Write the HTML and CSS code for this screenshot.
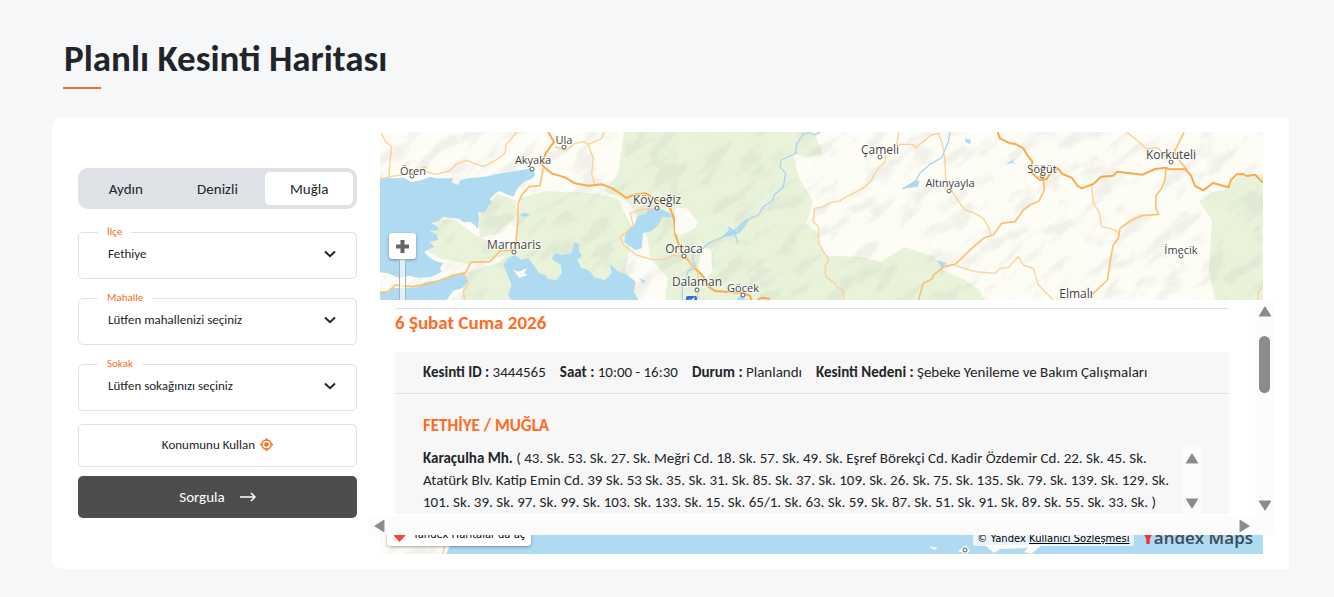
FILE: index.html
```html
<!DOCTYPE html>
<html lang="tr">
<head>
<meta charset="utf-8">
<title>Planlı Kesinti Haritası</title>
<link rel="stylesheet" href="styles.css">
</head>
<body>
<main class="page">
  <h1 class="page-title">Planlı Kesinti Haritası</h1>
  <section class="card">
    <form class="filters">
      <div class="tabs">
        <button type="button" class="tab">Aydın</button>
        <button type="button" class="tab">Denizli</button>
        <button type="button" class="tab tab-active">Muğla</button>
      </div>
      <div class="field">
        <label for="ilce">İlçe</label>
        <select id="ilce"><option>Fethiye</option></select>
        <svg class="chevron" viewBox="0 0 12 8"><path d="M1 1.5 6 6.2 11 1.5"/></svg>
      </div>
      <div class="field">
        <label for="mahalle">Mahalle</label>
        <select id="mahalle"><option>Lütfen mahallenizi seçiniz</option></select>
        <svg class="chevron" viewBox="0 0 12 8"><path d="M1 1.5 6 6.2 11 1.5"/></svg>
      </div>
      <div class="field">
        <label for="sokak">Sokak</label>
        <select id="sokak"><option>Lütfen sokağınızı seçiniz</option></select>
        <svg class="chevron" viewBox="0 0 12 8"><path d="M1 1.5 6 6.2 11 1.5"/></svg>
      </div>
      <button type="button" class="btn btn-locate">Konumunu Kullan
        <svg class="locate-icon" viewBox="0 0 13 13"><circle cx="6.500" cy="6.500" r="4.600"/><circle class="dot" cx="6.500" cy="6.500" r="2.300"/><path d="M6.500 0v2M6.500 11v2M0 6.500h2M11 6.500h2"/></svg>
      </button>
      <button type="submit" class="btn btn-submit">Sorgula
        <svg class="arrow-icon" viewBox="0 0 16 10"><path d="M0 5h15M11 1l4 4-4 4"/></svg>
      </button>
    </form>

    <div class="map-column">
      <div class="map">
        <svg class="map-canvas" viewBox="380 132 883 422" preserveAspectRatio="xMidYMin slice">
          <defs>
            <filter id="relief" x="0" y="0" width="100%" height="100%">
              <feTurbulence type="fractalNoise" baseFrequency="0.03 0.07" numOctaves="3" seed="8"/>
              <feColorMatrix values="0 0 0 0 .42  0 0 0 0 .43  0 0 0 0 .4  5 0 0 0 -2.5"/>
            </filter>
            <clipPath id="frame"><rect x="380" y="132" width="883" height="422"/></clipPath>
          </defs>
          <rect class="land" x="380" y="132" width="883" height="422"/>
          <g class="forest">
            <path d="M624 132H803L816 137 823 154 807 158 792 153 800 180 813 201 806 224 817 232 824 256 840 256 862 257 880 262 905 247 935 257 941 269 965 280 980 290 984 300H665L668 278 650 258 648 240 640 220 627 201 604 191 618 174Z"/>
            <path d="M521 198 545 191 590 193 617 198 632 227 630 248 625 270 636 290 615 300H460L468 272 500 262 515 245Z"/>
            <path d="M497 194 515 200 518 215 505 226 495 234 480 238 478 215ZM435 218 457 221 475 235 505 250 512 254 490 259 470 264 442 259 428 252Z"/>
            <path d="M1199 201 1212 192 1225 190 1238 176 1263 174V300H1215L1209 270 1212 220Z"/>
          </g>
          <g clip-path="url(#frame)"><rect class="relief" x="300" y="-400" width="1250" height="1200" filter="url(#relief)" transform="rotate(-38 820 300)"/></g>
          <g transform="translate(375 125) scale(.33333)">
            <g class="water">
              <path d="M15 163 40 158 60 160 85 158 100 166 110 172 140 165 165 155 185 160 235 160 230 172 250 180 257 165 290 158 330 155 360 148 400 142 440 135 475 130 480 150 470 162 450 168 430 185 415 215 395 208 372 198 358 208 344 222 352 235 340 242 330 262 310 262 312 285 308 312 300 300 285 290 265 292 250 280 225 278 205 275 190 288 170 295 185 303 190 315 165 318 185 328 190 345 163 350 178 365 148 380 160 395 180 408 205 415 195 430 200 440 170 455 130 458 100 452 70 458 40 445 15 442Z"/>
              <path d="M15 500 40 505 52 488 90 490 125 487 150 472 190 466 235 450 268 445 278 470 262 490 235 497 215 525H15Z"/>
              <path d="M385 420 400 400 418 390 440 405 460 400 480 425 492 445 510 450 520 462 545 465 560 445 558 420 530 402 540 385 560 390 590 385 598 352 612 358 612 380 622 392 606 405 618 428 640 435 660 458 690 465 710 445 705 418 730 440 760 452 782 470 775 498 790 525H408L400 510 410 480 400 455Z"/>
              <path d="M820 250 850 248 885 265 890 278 862 275 850 300 830 318 804 325 800 370 780 374 748 350 752 325 778 300 788 272 812 268ZM434 270 445 263 466 268 450 277ZM792 460 812 468 805 475Z"/>
            </g>
            <path class="isle" d="M415 435 430 440 455 430 448 445 458 450 432 458Z"/>
            <g class="road-minor">
              <path d="M20 25 30 48 50 65 45 110 42 155"/>
              <path d="M15 160 45 155 80 150 110 140 155 125 145 137 180 148 225 138 242 118 275 106 325 125 360 107 390 85 393 60 425 22"/>
              <path d="M688 22 678 42 640 58 625 50 600 55 575 76 540 66"/>
              <path d="M640 60 655 100 650 145 660 180"/>
              <path d="M845 250 790 255 765 265 775 300 755 320 735 335 745 360 785 390 830 404 870 404 900 388"/>
              <path d="M268 445 280 475 264 500 270 525"/>
            </g>
            <g class="road-mid">
              <path d="M505 130 495 182 462 185 440 210 430 235 428 300 420 375 375 378 345 410 287 412 272 443 230 452 170 475 110 485 60 480 40 500 15 503"/>
            </g>
            <path class="road-main" d="M520 22 537 50 512 85 500 120 530 145 570 157 600 175 640 182 680 178 712 190 755 219 775 210 812 205 850 228 885 248 898 285 900 325 915 370 930 395 960 430 985 455 1000 485 1020 498 1095 503 1125 512 1130 525"/>
          </g>
          <g transform="translate(675 125) scale(.33333)">
            <path class="isle" d="M0 248 35 250 70 290 60 310 20 330 0 325ZM80 365 108 375 112 440 95 460 70 430Z"/>
            <path class="lake" d="M165 310 185 320 200 295 222 285 200 318 180 330 140 338ZM190 515 205 508 210 525H186ZM870 40 888 45 885 58 872 52ZM680 192 715 170 732 165 730 185ZM785 405 815 415 800 430ZM992 118 1008 108 1020 100 1014 112 1024 118 1010 114Z"/>
            <g class="river">
              <path d="M435 22 418 30 402 22 385 28 365 55 362 85 318 105 315 125 332 145 325 185 298 210 292 228 265 245 250 270 215 285 175 320 130 342 100 355 85 370 60 380 52 400 62 425 38 440 32 470 22 480 22 525"/>
              <path d="M160 305 180 325 188 355M825 22 820 50 800 98 765 118 735 145 720 170 682 192"/>
            </g>
            <g class="road-minor">
              <path d="M672 22 665 58 632 82 630 110 602 140 590 165 570 185 540 203 505 220 495 228 470 232 440 247 418 250 415 290 430 305 432 355 448 385 462 402 450 425 452 455 480 475 492 490 505 497 506 525"/>
              <path d="M672 58 715 58 720 68 745 50 768 30 795 25"/>
              <path d="M788 22 802 55 810 105 812 165 835 205 855 235 870 255 900 265 925 280 942 310 948 330"/>
              <path d="M0 390 30 400 70 435M68 440V525M842 422 900 440 960 445 975 430 1000 428 1030 395 1045 420 1075 430 1090 480 1110 500 1135 525"/>
            </g>
            <path class="road-mid" d="M1105 155 1108 195 1092 228 1065 240 1045 255 1020 290 980 295 955 330 925 340 885 375 860 400 840 418 808 425 775 450 772 462 745 475 730 525"/>
            <path class="road-main" d="M248 524 262 518 285 522"/>
            <rect class="airport" x="33" y="513" width="33" height="30" rx="5"/>
            <path class="plane" d="M40 522 48 525 60 516 56 528 48 530Z"/>
          </g>
          <g transform="translate(975 125) scale(.33333)">
            <g class="road-minor">
              <path d="M455 22 485 45 515 72 550 68 565 90 590 95M350 180 355 235 372 260 380 305 405 310 432 322"/>
              <path d="M864 485 850 500 848 525"/>
            </g>
            <g class="road-mid">
              <path d="M627 22 598 80 615 110 635 132M573 130 570 165 560 190 543 212 542 248 551 268 500 272 465 288 435 310 430 340 415 360 408 395 397 465 345 515"/>
            </g>
            <path class="road-main" d="M68 22 75 40 105 55 122 57 145 70 158 92 172 110 168 142 195 165 215 162 228 140 248 130 262 147 290 158 308 183 320 190 355 177 378 155 415 152 427 140 503 149 540 132 572 128 580 132 632 133 648 152 660 183 685 196 714 174 760 187 768 165 785 148 805 147 815 153 840 149 864 173"/>
          </g>
          <path class="water-fill" d="M455 535H1263V554H446Z"/>
          <path class="isle" d="M929 546 938 548 934 550ZM958 551 966 545 970 551 966 554ZM985 545H1042L1031 554 1024 552 1028 548 1000 549 994 553Z"/>
          <path class="road-mid-thin" d="M446 535 443 554"/>
          <g class="towns">
            <circle cx="412" cy="176" r="2"/><circle cx="532" cy="169" r="2"/><circle cx="564" cy="147" r="2"/><circle cx="514" cy="252" r="2"/><circle cx="657" cy="208" r="2"/><circle cx="684" cy="256" r="2"/><circle cx="697" cy="290" r="2"/><circle cx="743" cy="295" r="2"/><circle cx="880" cy="157" r="2"/><circle cx="949" cy="191" r="2"/><circle cx="1042" cy="176" r="2"/><circle cx="1171" cy="162" r="2"/><circle cx="1181" cy="256" r="2"/><circle cx="965" cy="550" r="2"/>
          </g>
          <g class="labels">
            <text x="413" y="175" class="small">Ören</text>
            <text x="533" y="164" class="small">Akyaka</text>
            <text x="564" y="144" class="small">Ula</text>
            <text x="514" y="249">Marmaris</text>
            <text x="657" y="204">Köyceğiz</text>
            <text x="684" y="253">Ortaca</text>
            <text x="697" y="286">Dalaman</text>
            <text x="743" y="292" class="small">Göcek</text>
            <text x="880" y="154">Çameli</text>
            <text x="950" y="187" class="small">Altınyayla</text>
            <text x="1042" y="173" class="small">Söğüt</text>
            <text x="1171" y="159">Korkuteli</text>
            <text x="1181" y="254" class="small">İmecik</text>
            <text x="1076" y="298">Elmalı</text>
          </g>
        </svg>
        <div class="zoom-control">
          <button type="button" class="zoom-in" aria-label="Yakınlaştır"><svg viewBox="0 0 13 13"><path d="M6.500 0v13M0 6.500h13"/></svg></button>
          <div class="zoom-rail"></div>
        </div>
        <div class="map-footer">
          <a class="open-maps" href="#"><svg viewBox="0 0 14 18"><path d="M7 0C3 0 0 3 0 7c0 2 1 4 3 5.500L7 17l4-4.500C13 11 14 9 14 7c0-4-3-7-7-7Z"/></svg>Yandex Haritalar'da aç</a>
          <span class="copyright">© Yandex <a href="#">Kullanıcı Sözleşmesi</a></span>
          <span class="brand"><b>Y</b>andex Maps</span>
        </div>
      </div>

      <div class="results">
        <div class="results-view">
          <h2 class="date">6 Şubat Cuma 2026</h2>
          <article class="outage">
            <p class="outage-head">
              <span><b>Kesinti ID :</b> 3444565</span>
              <span><b>Saat :</b> 10:00 - 16:30</span>
              <span><b>Durum :</b> Planlandı</span>
              <span><b>Kesinti Nedeni :</b> Şebeke Yenileme ve Bakım Çalışmaları</span>
            </p>
            <div class="outage-body">
              <h3 class="region">FETHİYE / MUĞLA</h3>
              <div class="streets">
                <p><b>Karaçulha Mh.</b> ( 43. Sk. 53. Sk. 27. Sk. Meğri Cd. 18. Sk. 57. Sk. 49. Sk. Eşref Börekçi Cd. Kadir Özdemir Cd. 22. Sk. 45. Sk.<br>Atatürk Blv. Katip Emin Cd. 39 Sk. 53 Sk. 35. Sk. 31. Sk. 85. Sk. 37. Sk. 109. Sk. 26. Sk. 75. Sk. 135. Sk. 79. Sk. 139. Sk. 129. Sk.<br>101. Sk. 39. Sk. 97. Sk. 99. Sk. 103. Sk. 133. Sk. 15. Sk. 65/1. Sk. 63. Sk. 59. Sk. 87. Sk. 51. Sk. 91. Sk. 89. Sk. 55. Sk. 33. Sk. )</p>
                <div class="track">
                  <svg class="tri" viewBox="0 0 12 10"><path d="M6 1 11 9H1Z"/></svg>
                  <svg class="tri" viewBox="0 0 12 10"><path d="M6 9 11 1H1Z"/></svg>
                </div>
              </div>
            </div>
          </article>
        </div>
        <div class="track track-main">
          <svg class="tri" viewBox="0 0 12 10"><path d="M6 1 11 9H1Z"/></svg>
          <div class="thumb"></div>
          <svg class="tri" viewBox="0 0 12 10"><path d="M6 9 11 1H1Z"/></svg>
        </div>
        <div class="track-bottom">
          <svg class="tri-side" viewBox="0 0 10 12"><path d="M1 6 9 1V11Z"/></svg>
          <svg class="tri-side" viewBox="0 0 10 12"><path d="M9 6 1 1V11Z"/></svg>
        </div>
      </div>
    </div>
  </section>
</main>
</body>
</html>
```
FILE: styles.css
```css
* { box-sizing: border-box; }
body {
  margin: 0;
  background: #f5f7f9;
  color: #212529;
  font-family: Carlito, Lato, "Noto Sans", sans-serif;
  font-size: 15px;
}
button, select { font: inherit; color: inherit; }
.page { padding: 36px 45px 28px 52px; }
.page-title {
  margin: 0 0 28px 12px;
  font-size: 37px;
  line-height: 46px;
  font-weight: 700;
}
.page-title::after {
  content: "";
  display: block;
  width: 38px;
  height: 2px;
  margin: 5px 0 0 -1px;
  background: #ff6b22;
}
.card {
  display: flex;
  gap: 12px;
  padding: 15px 15px 15px 26px;
  background: #fff;
  border-radius: 10px 0 0 10px;
}
.filters { flex: 0 0 279px; padding-top: 36px; }
.tabs {
  display: grid;
  grid-template-columns: 1fr 1fr 1fr;
  gap: 4px;
  padding: 4px;
  margin-bottom: 23px;
  background: #dee1e6;
  border-radius: 10px;
}
.tab {
  height: 33px;
  padding: 0;
  border: 0;
  border-radius: 5px;
  background: none;
}
.tab-active { background: #fff; }
.field { position: relative; height: 47px; margin-bottom: 19px; font-size: 13px; }
.field label {
  position: absolute;
  top: -8px;
  left: 20px;
  padding: 0 9px;
  background: #fff;
  color: #ff6b22;
  font-size: 11px;
  line-height: 16px;
}
.field select {
  appearance: none;
  width: 100%;
  height: 47px;
  padding: 0 40px 4px 29px;
  border: 1px solid #dee1e6;
  border-radius: 5px;
  background: #fff;
}
.chevron {
  position: absolute;
  top: 18px;
  right: 21px;
  width: 12px;
  height: 8px;
  fill: none;
  stroke: #212529;
  stroke-width: 2;
  pointer-events: none;
}
.btn {
  display: flex;
  align-items: center;
  justify-content: center;
  width: 100%;
  border-radius: 5px;
}
.btn-locate {
  gap: 5px;
  height: 43px;
  margin: -6px 0 9px;
  padding-bottom: 3px;
  border: 1px solid #dee1e6;
  background: #fff;
  font-size: 13px;
}
.locate-icon { width: 13px; height: 13px; fill: none; stroke: #ff6b22; stroke-width: 1.5; }
.locate-icon .dot { fill: #ff6b22; stroke: none; }
.btn-submit { gap: 15px; height: 42px; border: 0; background: #4d4d4d; color: #fff; }
.arrow-icon { width: 16px; height: 10px; fill: none; stroke: #fff; stroke-width: 1.5; }

.map-column { position: relative; flex: 1; min-width: 0; padding: 0 11px; }
.map { position: relative; height: 422px; overflow: hidden; }
.map-canvas { display: block; width: 100%; height: 100%; }
.land { fill: #fdfcf5; }
.forest { fill: #e8f3da; }
.relief { opacity: .14; }
.water, .water-fill, .lake { fill: #aedaf2; }
.isle { fill: #fdfcf4; }
.river { fill: none; stroke: #a5d5f2; stroke-width: 4; stroke-linejoin: round; }
.road-minor, .road-mid, .road-main { fill: none; stroke-linejoin: round; }
.road-minor { stroke: #fcd09a; stroke-width: 4; }
.road-mid { stroke: #fdc16f; stroke-width: 5; }
.road-main { stroke: #fda84a; stroke-width: 6; }
.road-mid-thin { fill: none; stroke: #fbd9ae; stroke-width: 2; }
.airport { fill: #2f6fe0; }
.plane { fill: #fff; }
.towns { fill: #fff; stroke: #555; stroke-width: 1; }
.labels {
  font-family: "Open Sans", "Noto Sans", sans-serif;
  font-size: 12px;
  text-anchor: middle;
  fill: #444;
  stroke: #fff;
  stroke-opacity: .7;
  stroke-width: 2;
  paint-order: stroke;
}
.labels .small { font-size: 11px; }
.zoom-control {
  position: absolute;
  top: 101px;
  left: 9px;
  display: flex;
  flex-direction: column;
  align-items: center;
}
.zoom-in {
  display: flex;
  align-items: center;
  justify-content: center;
  width: 27px;
  height: 26px;
  padding: 0;
  border: 0;
  border-radius: 3px;
  background: #fff;
  box-shadow: 0 1px 3px rgba(0, 0, 0, .35);
}
.zoom-in svg { width: 13px; height: 13px; stroke: #666; stroke-width: 4; }
.zoom-rail {
  width: 7px;
  height: 130px;
  border: 1px solid #a9b0b4;
  background: rgba(255, 255, 255, .6);
}
.map-footer {
  position: absolute;
  right: 10px;
  bottom: 4px;
  left: 7px;
  display: flex;
  align-items: flex-end;
  font-family: "DejaVu Sans", sans-serif;
  font-size: 10px;
  color: #000;
}
.open-maps {
  display: flex;
  align-items: center;
  gap: 7px;
  height: 22px;
  margin-bottom: 4px;
  padding: 0 6px;
  border-radius: 3px;
  background: #fff;
  box-shadow: 0 1px 3px rgba(0, 0, 0, .35);
  color: #000;
  text-decoration: none;
  line-height: 22px;
}
.open-maps svg { width: 13px; height: 16px; fill: #f43; }
.copyright {
  margin: 0 9px 4px auto;
  padding: 0 4px;
  border-radius: 3px;
  background: rgba(255, 255, 255, .75);
  line-height: 14px;
}
.copyright a { color: #000; }
.brand {
  font-family: "Open Sans", "Noto Sans", sans-serif;
  font-size: 17px;
  line-height: 24px;
  font-weight: 600;
  color: #3b4a54;
}
.brand b { color: #e33; }

.results {
  position: absolute;
  top: 168px;
  right: 0;
  left: 0;
  display: grid;
  grid-template-columns: 1fr 19px;
  grid-template-rows: 216px 19px;
  background: #fff;
}
.results-view { overflow: hidden; padding: 8px 26px 0; }
.date {
  margin: 0 0 1px;
  border-top: 1px solid #dee1e6;
  padding-top: 2px;
  height: 43px;
  font-size: 19px;
  line-height: 24px;
  font-weight: 700;
  color: #ff6b22;
}
.outage { background: #f7f7f7; }
.outage-head {
  display: flex;
  gap: 14px;
  margin: 0;
  padding: 0 28px;
  border-bottom: 1px solid #e0e2e5;
  line-height: 41px;
  white-space: nowrap;
}
.outage-body { padding: 20px 28px 0; }
.region { margin: 0 0 9px; font-size: 17px; line-height: 24px; font-weight: 700; color: #ff6b22; }
.streets { display: flex; justify-content: space-between; height: 67px; }
.streets p { margin: 0; line-height: 22px; white-space: nowrap; }
.track {
  display: flex;
  flex: 0 0 19px;
  flex-direction: column;
  align-items: center;
  justify-content: space-between;
  padding: 6px 0 5px;
  background: #fcfcfc;
}
.tri { width: 14px; height: 11px; }
.tri path, .tri-side path { fill: #8b8b8b; stroke: #8b8b8b; stroke-width: 1; stroke-linejoin: round; }
.track-main { justify-content: flex-start; }
.track-main .tri:last-child { margin-top: auto; }
.thumb { width: 11px; height: 57px; margin-top: 19px; border-radius: 6px; background: #8b8b8b; }
.track-bottom {
  display: flex;
  grid-column: 1 / -1;
  align-items: center;
  justify-content: space-between;
  padding: 0 24px 0 5px;
  background: #fcfcfc;
}
.tri-side { width: 11px; height: 14px; }
```
